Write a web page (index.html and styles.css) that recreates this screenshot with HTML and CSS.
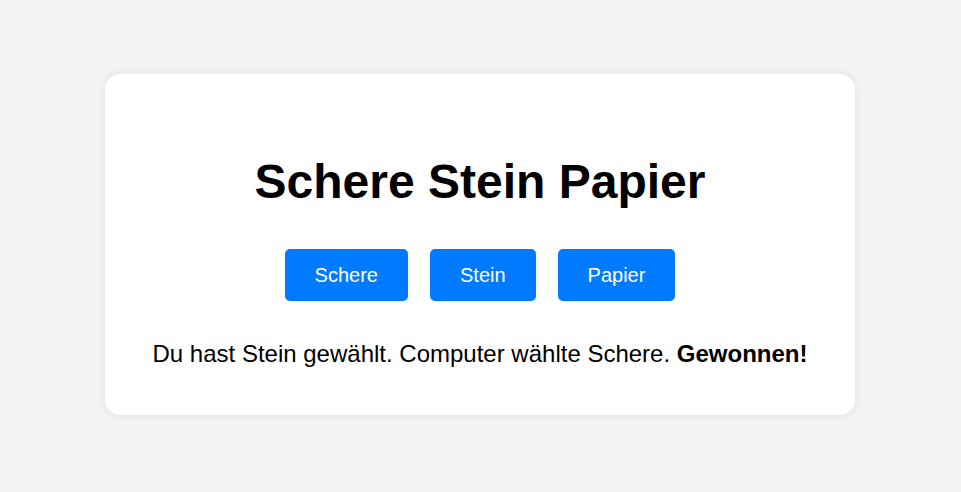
FILE: index.html
```html
<!DOCTYPE html>
<html lang="de">
<head>
<meta charset="utf-8">
<title>Schere Stein Papier</title>
<link rel="stylesheet" href="styles.css">
</head>
<body>
<div class="card">
  <h1 class="title">Schere Stein Papier</h1>
  <div class="buttons">
    <button class="btn">Schere</button>
    <button class="btn">Stein</button>
    <button class="btn">Papier</button>
  </div>
  <p class="result">Du hast Stein gewählt. Computer wählte Schere. <strong>Gewonnen!</strong></p>
</div>
</body>
</html>
```
FILE: styles.css
```css
html, body { margin: 0; padding: 0; }
body {
  background: #f4f4f4;
  font-family: "Liberation Sans", Arial, sans-serif;
  height: 100vh;
  box-sizing: border-box;
  padding: 0 1px 4px 0;
  display: flex;
  align-items: center;
  justify-content: center;
}
.card {
  width: 750px;
  box-sizing: border-box;
  background: #fff;
  border-radius: 15px;
  box-shadow: 0 0 10px rgba(0,0,0,0.1);
  padding: 48px 40px 47px;
  text-align: center;
}
.title {
  font-size: 48px;
  margin: 32px 0 40px;
  color: #000;
}
.buttons {
  display: flex;
  justify-content: center;
  gap: 22px;
}
.btn {
  font-family: "Liberation Sans", Arial, sans-serif;
  font-size: 20px;
  line-height: 24px;
  padding: 14px 30px;
  background: #007bff;
  color: #fff;
  border: none;
  border-radius: 5px;
}
.result {
  font-size: 24px;
  margin: 39px 0 0;
  color: #000;
}
```
